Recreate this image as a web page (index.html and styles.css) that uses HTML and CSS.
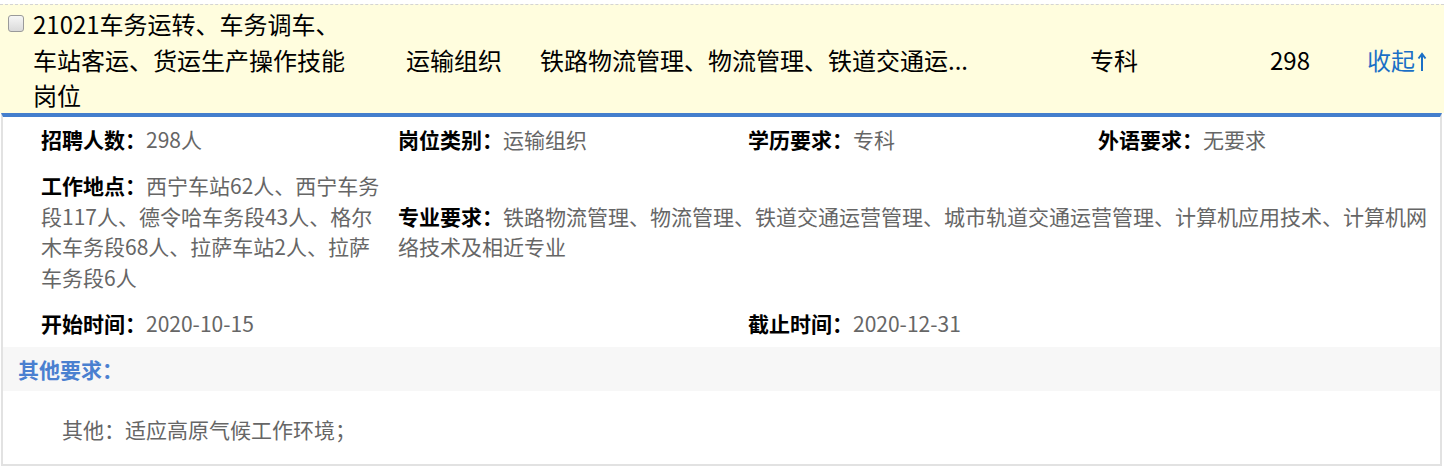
FILE: index.html
```html
<!DOCTYPE html>
<html lang="zh-CN">
<head>
  <meta charset="UTF-8" />
  <title>岗位详情</title>
  <link rel="stylesheet" href="styles.css">
</head>
<body>
  <div class="job-list">
    <!-- 岗位行 -->
    <div class="job-row">
      <label class="cell cell-check"><input type="checkbox" /></label>
      <div class="cell cell-title">21021车务运转、车务调车、车站客运、货运生产操作技能岗位</div>
      <div class="cell cell-type">运输组织</div>
      <div class="cell cell-major">铁路物流管理、物流管理、铁道交通运...</div>
      <div class="cell cell-edu">专科</div>
      <div class="cell cell-num">298</div>
      <div class="cell cell-toggle">
        <a href="#">收起<svg class="arrow" viewBox="0 0 10 19" width="10" height="19"><path d="M5 19V2M1.5 6.5L5 2l3.5 4.5" fill="none" stroke="currentColor" stroke-width="2"/></svg></a>
      </div>
    </div>

    <!-- 展开的详情 -->
    <div class="job-detail">
      <div class="detail-grid">
        <div class="item"><b>招聘人数：</b>298人</div>
        <div class="item"><b>岗位类别：</b>运输组织</div>
        <div class="item"><b>学历要求：</b>专科</div>
        <div class="item"><b>外语要求：</b>无要求</div>

        <div class="item item-place"><b>工作地点：</b>西宁车站62人、西宁车务段117人、德令哈车务段43人、格尔木车务段68人、拉萨车站2人、拉萨车务段6人</div>
        <div class="item item-major"><b>专业要求：</b>铁路物流管理、物流管理、铁道交通运营管理、城市轨道交通运营管理、计算机应用技术、计算机网络技术及相近专业</div>

        <div class="item item-start"><b>开始时间：</b>2020-10-15</div>
        <div class="item item-end"><b>截止时间：</b>2020-12-31</div>
      </div>

      <div class="other-title">其他要求：</div>
      <div class="other-text">其他：适应高原气候工作环境；</div>
    </div>
  </div>
</body>
</html>
```

FILE: styles.css
```css
body {
  margin: 0;
  font-family: "Noto Sans CJK SC", "Noto Sans", sans-serif;
  background: #fff;
  color: #000;
}

.job-list {
  padding-top: 4px;
}

/* 岗位行 */
.job-row {
  display: flex;
  align-items: center;
  border-top: 1px dashed #d4d4d4;
  background: #fffdde;
  padding-top: 1px;
  font-size: 24px;
  line-height: 35.5px;
}

.cell {
  flex: none;
}

.cell-check {
  align-self: flex-start;
  width: 25px;
  padding: 9px 0 0 8px;
  line-height: 0;
}

.cell-check input {
  appearance: none;
  margin: 0;
  width: 16px;
  height: 17px;
  border: 1px solid #9a9a9a;
  border-radius: 3px;
  background: linear-gradient(#f6f6f6, #dadada);
}

.cell-title {
  width: 318px;
  padding-right: 55px;
}

.cell-type {
  width: 134px;
}

.cell-major {
  width: 550px;
  white-space: nowrap;
}

.cell-edu {
  width: 180px;
}

.cell-num {
  width: 97px;
}

.cell-toggle {
  flex: 1;
}

.cell-toggle a {
  color: #1b70c6;
  text-decoration: none;
}

.cell-toggle .arrow {
  margin-left: 2px;
  vertical-align: -1px;
}

/* 详情 */
.job-detail {
  margin: 0 2px 0 1px;
  border: 2px solid #e2e2e2;
  border-top: 4px solid #447ecd;
}

.detail-grid {
  display: grid;
  grid-template-columns: 357px 350px 350px 1fr;
  row-gap: 16px;
  align-items: center;
  padding: 7px 8px 8px 38px;
  font-size: 21px;
  line-height: 30.5px;
  color: #666;
}

.item b {
  color: #000;
}

.item-place {
  grid-column: 1;
  padding-right: 12px;
}

.item-major {
  grid-column: 2 / 5;
}

.item-start {
  grid-column: 1 / 3;
}

.item-end {
  grid-column: 3 / 5;
}

.other-title {
  background: #f7f7f7;
  height: 44px;
  line-height: 44px;
  padding-left: 15px;
  font-size: 21px;
  font-weight: bold;
  color: #4a80d0;
}

.other-text {
  padding: 23px 0 20px 59px;
  font-size: 21px;
  line-height: 30.5px;
  color: #666;
}
```
